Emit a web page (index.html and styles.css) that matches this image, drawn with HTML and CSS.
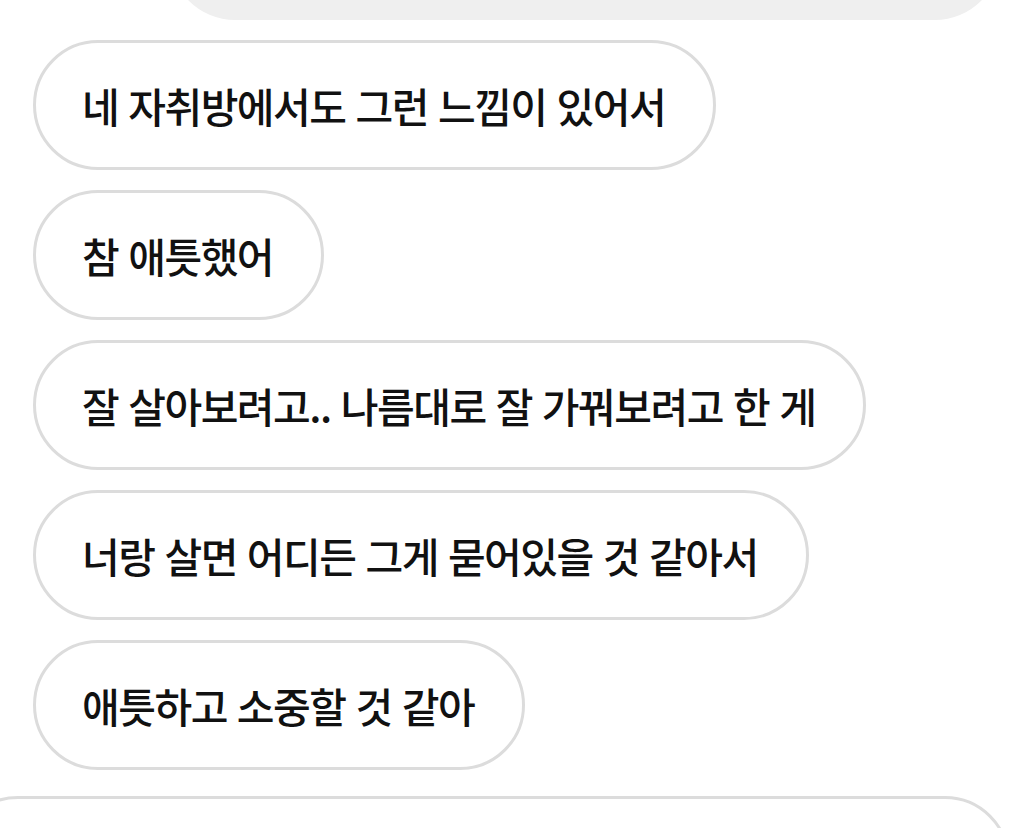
FILE: index.html
```html
<!DOCTYPE html>
<html lang="ko">
<head>
    <meta charset="UTF-8">
    <meta name="viewport" content="width=device-width, initial-scale=1.0">
    <title>채팅</title>
    <link rel="stylesheet" href="styles.css">
</head>
<body>
    <div class="chat">
        <div class="bubble sent top-cut"></div>

        <div class="bubble received">네 자취방에서도 그런 느낌이 있어서</div>
        <div class="bubble received">참 애틋했어</div>
        <div class="bubble received">잘 살아보려고.. 나름대로 잘 가꿔보려고 한 게</div>
        <div class="bubble received">너랑 살면 어디든 그게 묻어있을 것 같아서</div>
        <div class="bubble received">애틋하고 소중할 것 같아</div>

        <div class="bubble received bottom-cut"></div>
    </div>
</body>
</html>
```

FILE: styles.css
```css
body {
    font-family: 'Noto Sans CJK KR', 'Noto Sans', sans-serif;
    background-color: #fff;
    color: #111;
    margin: 0;
    padding: 0;
    overflow: hidden;
    height: 828px;
}
.chat {
    display: flex;
    flex-direction: column;
    align-items: flex-start;
    gap: 20px;
    padding-left: 33px;
}
.bubble {
    box-sizing: border-box;
    height: 130px;
    border-radius: 65px;
    padding: 0 48px 0 46px;
    display: flex;
    align-items: center;
    font-size: 41px;
    font-weight: 500;
    letter-spacing: -1.5px;
    white-space: nowrap;
}
.received {
    background-color: #fff;
    border: 3px solid #dcdcdc;
}
.sent {
    background-color: #efefef;
}
.top-cut {
    margin-top: -110px;
    margin-left: 137px;
    width: 830px;
}
.bottom-cut {
    margin-left: -80px;
    width: 1057px;
    margin-top: 6px;
}
```
